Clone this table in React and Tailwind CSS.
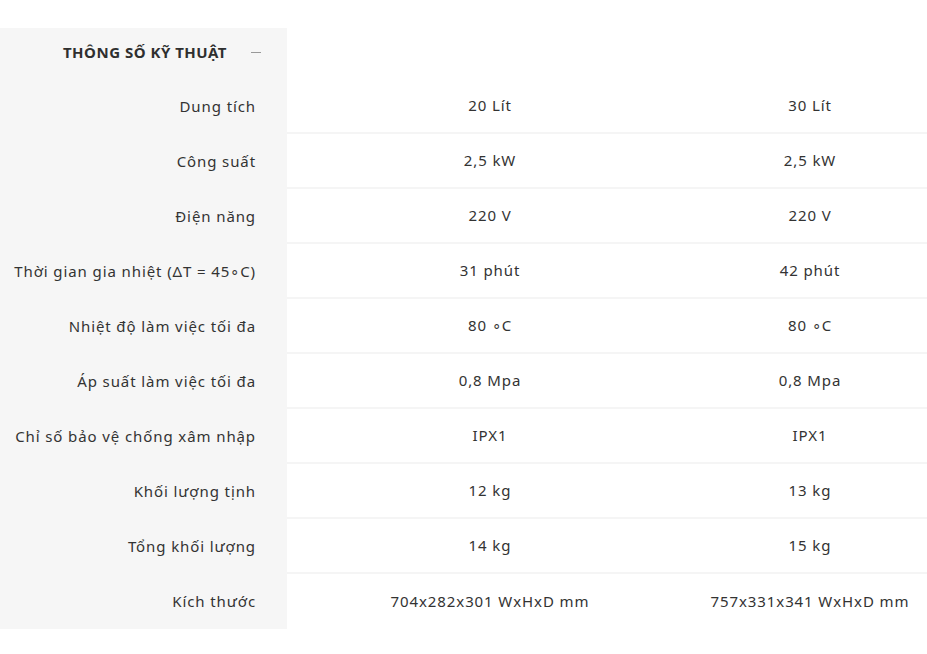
import React from 'react'

const specs = [
  ['Dung tích', '20 Lít', '30 Lít'],
  ['Công suất', '2,5 kW', '2,5 kW'],
  ['Điện năng', '220 V', '220 V'],
  ['Thời gian gia nhiệt (ΔT = 45∘C)', '31 phút', '42 phút'],
  ['Nhiệt độ làm việc tối đa', '80 ∘C', '80 ∘C'],
  ['Áp suất làm việc tối đa', '0,8 Mpa', '0,8 Mpa'],
  ['Chỉ số bảo vệ chống xâm nhập', 'IPX1', 'IPX1'],
  ['Khối lượng tịnh', '12 kg', '13 kg'],
  ['Tổng khối lượng', '14 kg', '15 kg'],
  ['Kích thước', '704x282x301 WxHxD mm', '757x331x341 WxHxD mm'],
]

function SpecRow({ label, a, b, last }) {
  return (
    <div className="grid grid-cols-[287px_406px_1fr] h-[55px]">
      <div className="flex items-center justify-end bg-[#f6f6f6] pr-[31px]">{label}</div>
      <div className={`flex items-center justify-center ${last ? '' : 'border-b-2 border-[#f5f5f5]'}`}>{a}</div>
      <div className={`flex items-center justify-center ${last ? '' : 'border-b-2 border-[#f5f5f5]'}`}>{b}</div>
    </div>
  )
}

export default function App() {
  return (
    <div
      className="min-h-screen bg-white pt-[28px] text-[15px] tracking-[0.9px] text-[#333]"
      style={{ fontFamily: '"Noto Sans", "Liberation Sans", sans-serif' }}
    >
      <div className="grid grid-cols-[287px_1fr] h-[51px]">
        <div className="flex items-center justify-end bg-[#f6f6f6] pr-[26px] pb-[3px]">
          <span className="font-bold tracking-[0.5px] text-[#2f2f2f]">THÔNG SỐ KỸ THUẬT</span>
          <span className="ml-[24px] block h-px w-[10px] bg-[#999]" />
        </div>
        <div />
      </div>
      {specs.map(([label, a, b], i) => (
        <SpecRow key={label} label={label} a={a} b={b} last={i === specs.length - 1} />
      ))}
    </div>
  )
}
